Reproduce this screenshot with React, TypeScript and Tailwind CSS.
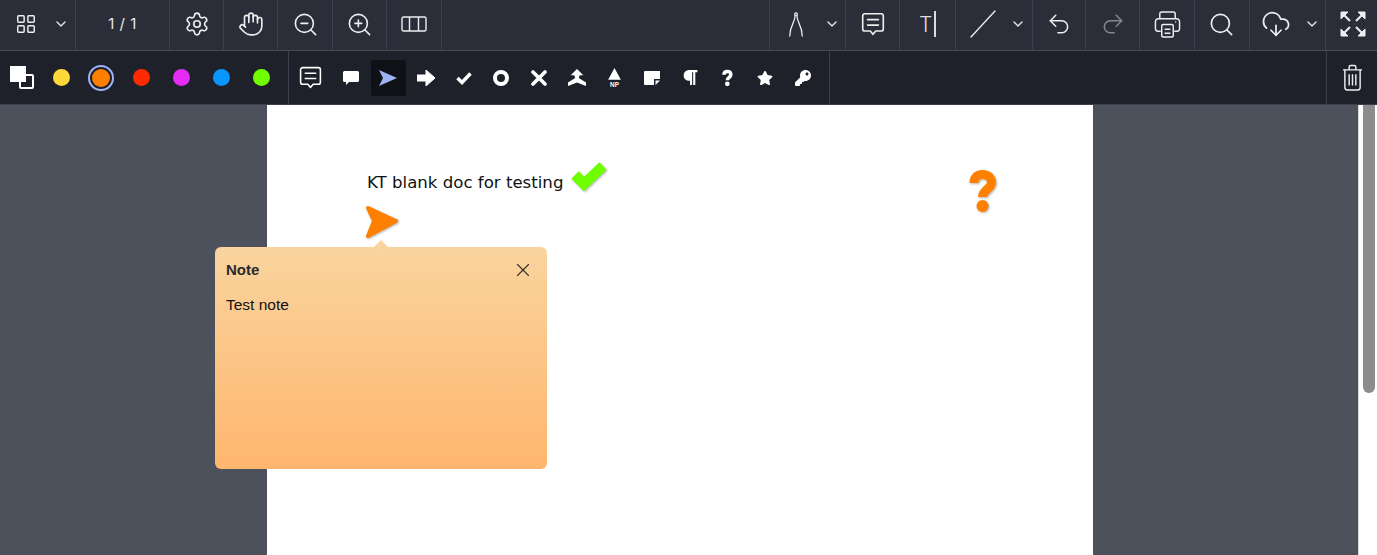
import type { ReactNode } from "react";
import {
  ChevronDown,
  LayoutGrid,
  Hand,
  Settings,
  ZoomIn,
  ZoomOut,
  Undo2,
  Redo2,
  Search,
  CloudDownload,
  X,
} from "lucide-react";
import { FaKey, FaParagraph, FaStar } from "react-icons/fa";

const COLORS = ["#ffd83b", "#ff8000", "#ff2b00", "#e52cf5", "#0a96ff", "#6fff00"];

function Cell({ width, children }: { width: string; children: ReactNode }) {
  return (
    <div className={`flex h-full shrink-0 items-center justify-center border-r border-[#3d404c] pb-[2px] ${width}`}>
      {children}
    </div>
  );
}

function Chevron() {
  return <ChevronDown className="h-4 w-4 text-[#e8e8ea]" strokeWidth={2} />;
}

function CommentIcon({ className }: { className: string }) {
  return (
    <svg viewBox="0 0 24 24" fill="none" stroke="currentColor" strokeWidth="1.5" className={className}>
      <path d="M4.500 2.500h15a2 2 0 0 1 2 2v12a2 2 0 0 1-2 2h-5L12 21.500 9.500 18.500h-5a2 2 0 0 1-2-2v-12a2 2 0 0 1 2-2z" strokeLinejoin="round" />
      <path d="M7 8h10M7 13h10" strokeLinecap="round" />
    </svg>
  );
}

function QuestionIcon({ className }: { className: string }) {
  return (
    <svg viewBox="0 0 32 46" className={className}>
      <path d="M7 15C7 9 11 6.500 15.500 6.500 21 6.500 24.500 10 24.500 14.500 24.500 21 15.500 21.500 15.500 29" fill="none" stroke="currentColor" strokeWidth="9" />
      <circle cx="15.500" cy="38" r="6" fill="currentColor" />
    </svg>
  );
}

function TopBar() {
  return (
    <div className="flex h-[51px] items-stretch border-b border-[#4a4d58] bg-[#2b2e39] text-[#eeeef0]">
      <div className="flex h-full w-[76px] shrink-0 items-center border-r border-[#3d404c] pb-[2px] pl-[15px]">
        <LayoutGrid className="h-[22px] w-[22px]" strokeWidth={1.6} />
        <div className="ml-[16px]">
          <Chevron />
        </div>
      </div>
      <Cell width="w-[94px]">
        <span className="font-['Inter',sans-serif] text-[15px] tracking-[0.5px] text-[#e8e8ea]">1 / 1</span>
      </Cell>
      <Cell width="w-[54px]">
        <Settings className="h-[26px] w-[26px]" strokeWidth={1.5} />
      </Cell>
      <Cell width="w-[54px]">
        <Hand className="h-[26px] w-[26px]" strokeWidth={1.5} />
      </Cell>
      <Cell width="w-[55px]">
        <ZoomOut className="h-[27px] w-[27px]" strokeWidth={1.4} />
      </Cell>
      <Cell width="w-[54px]">
        <ZoomIn className="h-[27px] w-[27px]" strokeWidth={1.4} />
      </Cell>
      <Cell width="w-[55px]">
        <svg viewBox="0 0 26 16" fill="none" stroke="currentColor" strokeWidth="1.4" className="h-[16px] w-[26px]">
          <rect x="1" y="1" width="24" height="14" rx="1.500" />
          <path d="M8.500 1v14M17.500 1v14" />
        </svg>
      </Cell>
      <div className="flex-1" />
      <div className="flex h-full w-[77px] shrink-0 items-center border-x border-[#3d404c] pb-[2px] pl-[18px]">
        <svg viewBox="0 0 18 30" fill="none" stroke="currentColor" strokeWidth="1.400" className="h-[27px] w-[16px]">
          <circle cx="9" cy="3.500" r="1.500" />
          <path d="M8 5C8 13 2 16 2 28M10 5c0 8 6 11 6 23" strokeLinecap="round" />
        </svg>
        <div className="ml-[20px]">
          <Chevron />
        </div>
      </div>
      <Cell width="w-[54px]">
        <CommentIcon className="h-[26px] w-[26px]" />
      </Cell>
      <Cell width="w-[56px]">
        <div className="flex items-center">
          <span className="font-['Inter',sans-serif] text-[21px] leading-none font-light text-[#dcdcdf]">T</span>
          <div className="ml-[2px] h-[26px] w-[1.5px] bg-[#dcdcdf]" />
        </div>
      </Cell>
      <div className="flex h-full w-[77px] shrink-0 items-center border-r border-[#3d404c] pb-[2px] pl-[14px]">
        <svg viewBox="0 0 26 28" fill="none" stroke="currentColor" strokeWidth="1.300" className="h-[28px] w-[26px]">
          <path d="M1 27 25 1" strokeLinecap="round" />
        </svg>
        <div className="ml-[14px]">
          <Chevron />
        </div>
      </div>
      <Cell width="w-[53px]">
        <Undo2 className="h-[26px] w-[26px]" strokeWidth={1.4} />
      </Cell>
      <Cell width="w-[54px]">
        <Redo2 className="h-[26px] w-[26px] text-[#85878e]" strokeWidth={1.4} />
      </Cell>
      <Cell width="w-[55px]">
        <svg viewBox="0 0 28 30" fill="none" stroke="currentColor" strokeWidth="1.500" className="h-[29px] w-[27px]">
          <path d="M6 9V4a2 2 0 0 1 2-2h12a2 2 0 0 1 2 2v5" />
          <path d="M7 22H4a2.500 2.500 0 0 1-2.500-2.500V12A3 3 0 0 1 4.500 9h19a3 3 0 0 1 3 3v7.500A2.500 2.500 0 0 1 24 22h-3" />
          <rect x="8" y="15" width="12" height="13" rx="1.500" />
          <path d="M11 20h6M11 24h6M22 12.500h1" />
        </svg>
      </Cell>
      <Cell width="w-[55px]">
        <div className="pr-[2px]">
          <Search className="h-[27px] w-[27px]" strokeWidth={1.5} />
        </div>
      </Cell>
      <div className="flex h-full w-[76px] shrink-0 items-center border-r border-[#3d404c] pb-[2px] pl-[11px]">
        <CloudDownload className="h-[30px] w-[30px]" strokeWidth={1.4} />
        <div className="ml-[13px]">
          <Chevron />
        </div>
      </div>
      <div className="flex w-[51px] shrink-0 items-center justify-center pb-[2px] pl-[2px]">
        <svg viewBox="0 0 28 28" fill="currentColor" stroke="currentColor" strokeWidth="2" className="h-[28px] w-[28px]">
          <path d="M2 2h7L2 9zM26 2h-7l7 7zM2 26h7l-7-7zM26 26h-7l7-7z" strokeWidth="1" strokeLinejoin="round" />
          <path d="M5 5l6 6M23 5l-6 6M5 23l6-6M23 23l-6-6" fill="none" />
        </svg>
      </div>
    </div>
  );
}

function InsertIcon() {
  return (
    <svg viewBox="0 0 20 20" fill="currentColor" className="h-[18px] w-[18px]">
      <path d="M10 0 17 7h-4l-1 3 8 5v4l-10-4-10 4v-4l8-5-1-3H3z" />
    </svg>
  );
}

function NewParagraphIcon() {
  return (
    <svg viewBox="0 0 18 22" className="h-[20px] w-[17px]" fill="currentColor">
      <path d="M9 0 16 13H2z" />
      <text x="9" y="21" textAnchor="middle" fontSize="7" fontFamily="Liberation Sans, sans-serif" fontWeight="700">
        NP
      </text>
    </svg>
  );
}

function NoteIcon() {
  return (
    <svg viewBox="0 0 16 14" className="h-[14px] w-[16px]" fill="currentColor">
      <path d="M1 0h15v8h-6v6H1a1 1 0 0 1-1-1V1a1 1 0 0 1 1-1z" />
      <path d="M11.500 9.500H16L11.500 14z" />
    </svg>
  );
}

function MarkerTools() {
  const cell = "flex h-[36px] w-[37.7px] shrink-0 items-center justify-center";
  return (
    <div className="flex h-full items-center border-r border-[#3d404c] pr-[7px] pl-[5px] text-white">
      <div className={`${cell} pr-[5px]`}>
        <CommentIcon className="h-[25px] w-[25px]" />
      </div>
      <div className={cell}>
        <svg viewBox="0 0 16 14" fill="currentColor" className="h-[14px] w-[16px]">
          <path d="M1.500 0h13A1.500 1.500 0 0 1 16 1.500v8a1.500 1.500 0 0 1-1.500 1.500H6l-3 3v-3H1.500A1.500 1.500 0 0 1 0 9.500v-8A1.500 1.500 0 0 1 1.500 0z" />
        </svg>
      </div>
      <div className={cell}>
        <div className="flex h-[36px] w-[35px] items-center justify-center rounded-[2px] bg-[#0f1117]">
          <svg viewBox="0 0 18 16" fill="#9db4f5" className="h-[16px] w-[18px]">
            <path d="M0 0 18 8 0 16 4 8z" />
          </svg>
        </div>
      </div>
      <div className={cell}>
        <svg viewBox="0 0 18 16" fill="currentColor" className="h-[16px] w-[18px]">
          <path d="M0 5h9V0l9 8-9 8v-5H0z" strokeLinejoin="round" stroke="currentColor" />
        </svg>
      </div>
      <div className={cell}>
        <svg viewBox="0 0 16 14" fill="none" stroke="currentColor" strokeWidth="3.500" className="h-[14px] w-[16px]">
          <path d="M1.500 7 6 11.500 14.500 2.500" />
        </svg>
      </div>
      <div className={cell}>
        <div className="h-[16px] w-[16px] rounded-full border-[4px] border-white" />
      </div>
      <div className={cell}>
        <svg viewBox="0 0 16 16" fill="none" stroke="currentColor" strokeWidth="3.600" className="h-[16px] w-[16px]">
          <path d="M2 2 14 14M14 2 2 14" strokeLinecap="round" />
        </svg>
      </div>
      <div className={cell}>
        <InsertIcon />
      </div>
      <div className={cell}>
        <NewParagraphIcon />
      </div>
      <div className={cell}>
        <NoteIcon />
      </div>
      <div className={cell}>
        <FaParagraph className="h-[17px] w-[18px]" />
      </div>
      <div className={cell}>
        <QuestionIcon className="h-[18px] w-[13px]" />
      </div>
      <div className={cell}>
        <FaStar className="h-[16px] w-[16px]" />
      </div>
      <div className={cell}>
        <FaKey className="h-[16px] w-[16px]" />
      </div>
    </div>
  );
}

function SecondBar() {
  return (
    <div className="flex h-[54px] items-center border-b border-[#3d404c] bg-[#1f212a]">
      <div className="flex h-full w-[289px] shrink-0 items-center border-r border-[#3d404c] pl-[10px]">
        <div className="relative h-[23px] w-[24px] shrink-0">
          <div className="absolute right-0 bottom-0 h-[15px] w-[15px] rounded-[2px] border-2 border-white" />
          <div className="absolute top-0 left-0 h-[16px] w-[16px] bg-white" />
        </div>
        <div className="ml-[7px] flex items-center">
          {COLORS.map((color, i) => (
            <div key={color} className="flex w-[40px] items-center justify-center">
              {i === 1 ? (
                <div className="flex h-[26px] w-[26px] items-center justify-center rounded-full border-2 border-[#9db4f5]">
                  <div className="h-[18px] w-[18px] rounded-full" style={{ backgroundColor: color }} />
                </div>
              ) : (
                <div className="h-[17px] w-[17px] rounded-full" style={{ backgroundColor: color }} />
              )}
            </div>
          ))}
        </div>
      </div>
      <MarkerTools />
      <div className="flex-1" />
      <div className="flex h-full w-[51px] items-center justify-center border-l border-[#3d404c] text-[#eeeef0]">
        <svg viewBox="0 0 22 28" fill="none" stroke="currentColor" strokeWidth="1.500" className="h-[27px] w-[21px]">
          <path d="M1 6h20M7.500 6V3a1.500 1.500 0 0 1 1.500-1.500h4A1.500 1.500 0 0 1 14.500 3v3" />
          <path d="M3 6v18.500A2.500 2.500 0 0 0 5.500 27h11a2.500 2.500 0 0 0 2.500-2.500V6" />
          <path d="M7.500 10.500v12M11 10.500v12M14.500 10.500v12" />
        </svg>
      </div>
    </div>
  );
}

function NotePopup() {
  return (
    <div className="absolute top-[142px] left-[-52px] h-[222px] w-[332px] rounded-[6px] bg-[linear-gradient(180deg,#f9d49e,#ffb66e)] font-['Liberation_Sans',sans-serif]">
      <div className="absolute top-[-5px] left-[161px] h-[10px] w-[10px] rotate-45 bg-[#f9d49e]" />
      <div className="relative flex items-center justify-between pt-[12px] pr-[13px] pl-[11px]">
        <span className="text-[15px] leading-[16px] font-bold text-[#2a2a2a]">Note</span>
        <X className="h-[22px] w-[22px] text-[#33302c]" strokeWidth={1.2} />
      </div>
      <p className="relative mt-[15px] pl-[11px] text-[15.500px] leading-[18px] text-[#111]">Test note</p>
    </div>
  );
}

function Page() {
  return (
    <div className="relative ml-[267px] h-full w-[826px] bg-white">
      <span className="absolute top-[68px] left-[100px] font-['DejaVu_Sans',sans-serif] text-[16.600px] leading-5 whitespace-nowrap text-[#111]">
        KT blank doc for testing
      </span>
      <svg viewBox="0 0 36 32" fill="none" stroke="#6fff00" strokeWidth="10.500" className="absolute top-[55px] left-[304px] h-[32px] w-[36px] drop-shadow-[1px_1px_1px_rgba(0,0,0,0.3)]">
        <path d="M4 15 13 24 32 6" strokeLinejoin="miter" />
      </svg>
      <svg viewBox="0 0 36 36" className="absolute top-[98px] left-[97px] h-[36px] w-[36px] drop-shadow-[1px_1px_1px_rgba(0,0,0,0.3)]" fill="#ff8000" stroke="#ff8000" strokeWidth="4" strokeLinejoin="round">
        <path d="M4 5 32 18 4 33 10 18z" />
      </svg>
      <QuestionIcon className="absolute top-[63px] left-[700px] h-[46px] w-[32px] text-[#ff8000] drop-shadow-[1px_1px_1px_rgba(0,0,0,0.3)]" />
      <NotePopup />
    </div>
  );
}

export default function App() {
  return (
    <div className="flex h-[555px] w-[1377px] flex-col overflow-hidden">
      <TopBar />
      <SecondBar />
      <div className="flex min-h-0 flex-1 bg-[#4d515c]">
        <div className="min-w-0 flex-1">
          <Page />
        </div>
        <div className="w-[19px] shrink-0 border-l border-[#d8d8d8] bg-white pr-[2px] pl-[4px]">
          <div className="h-[288px] rounded-b-[6px] bg-[#8c8c8c]" />
        </div>
      </div>
    </div>
  );
}
